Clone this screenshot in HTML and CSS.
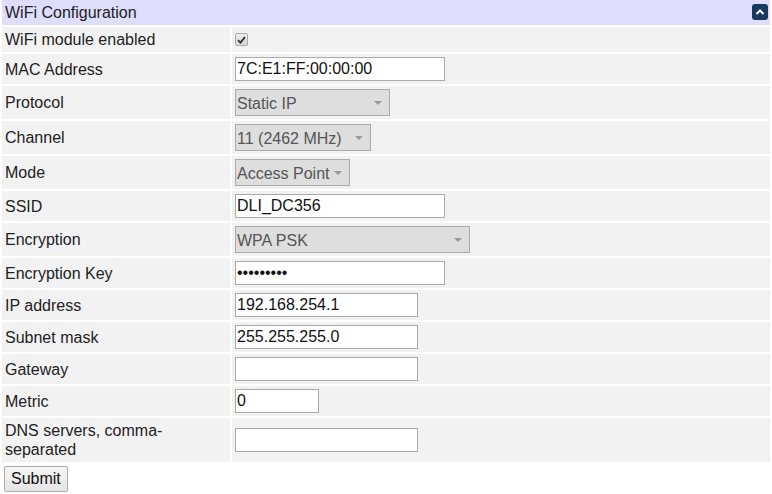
FILE: index.html
```html
<!DOCTYPE html>
<html lang="en">
<head>
  <meta charset="UTF-8">
  <title>WiFi Configuration</title>
  <link rel="stylesheet" href="styles.css">
</head>
<body>
  <form class="config">
    <table class="config-table">
      <thead>
        <tr>
          <th colspan="2" class="panel-title">
            WiFi Configuration
            <button type="button" class="collapse" title="Collapse">
              <svg width="10" height="6" viewBox="0 0 10 6"><path d="M1.5 5 L5 1.5 L8.5 5" fill="none" stroke="#fff" stroke-width="2"/></svg>
            </button>
          </th>
        </tr>
      </thead>
      <tbody>
        <tr>
          <td class="label">WiFi module enabled</td>
          <td class="value">
            <span class="check"><svg width="9" height="8" viewBox="0 0 9 8"><path d="M1 4.2 L3.4 6.6 L8 1.2" fill="none" stroke="#333" stroke-width="1.8"/></svg></span>
          </td>
        </tr>
        <tr>
          <td class="label">MAC Address</td>
          <td class="value"><input class="text wide" type="text" value="7C:E1:FF:00:00:00"></td>
        </tr>
        <tr>
          <td class="label">Protocol</td>
          <td class="value"><span class="select w-protocol"><select disabled><option>Static IP</option></select></span></td>
        </tr>
        <tr>
          <td class="label">Channel</td>
          <td class="value"><span class="select w-channel"><select disabled><option>11 (2462 MHz)</option></select></span></td>
        </tr>
        <tr>
          <td class="label">Mode</td>
          <td class="value"><span class="select w-mode"><select disabled><option>Access Point</option></select></span></td>
        </tr>
        <tr>
          <td class="label">SSID</td>
          <td class="value"><input class="text wide" type="text" value="DLI_DC356"></td>
        </tr>
        <tr>
          <td class="label">Encryption</td>
          <td class="value"><span class="select w-enc"><select disabled><option>WPA PSK</option></select></span></td>
        </tr>
        <tr>
          <td class="label">Encryption Key</td>
          <td class="value"><input class="text wide" type="password" value="secretkey"></td>
        </tr>
        <tr>
          <td class="label">IP address</td>
          <td class="value"><input class="text mid" type="text" value="192.168.254.1"></td>
        </tr>
        <tr>
          <td class="label">Subnet mask</td>
          <td class="value"><input class="text mid" type="text" value="255.255.255.0"></td>
        </tr>
        <tr>
          <td class="label">Gateway</td>
          <td class="value"><input class="text mid" type="text" value=""></td>
        </tr>
        <tr>
          <td class="label">Metric</td>
          <td class="value"><input class="text short" type="text" value="0"></td>
        </tr>
        <tr>
          <td class="label">DNS servers, comma-separated</td>
          <td class="value"><input class="text mid" type="text" value=""></td>
        </tr>
      </tbody>
    </table>
    <button type="submit" class="submit">Submit</button>
  </form>
</body>
</html>
```

FILE: styles.css
```css
body {
  margin: 0;
  font-family: "Liberation Sans", Arial, sans-serif;
  font-size: 16px;
  color: #222;
  background: #fff;
}

.config-table {
  width: 100%;
  margin-top: -2px;
  border-spacing: 2px;
}

.config-table td,
.config-table th {
  padding: 3px;
  line-height: 19px;
  vertical-align: middle;
}

.panel-title {
  background: #dedefc;
  font-weight: normal;
  text-align: left;
  color: #222;
}

.collapse {
  float: right;
  width: 16px;
  height: 16px;
  margin: 1px -1px 0 0;
  padding: 0;
  border: none;
  border-radius: 3px;
  background: #173b5f;
  display: flex;
  align-items: center;
  justify-content: center;
}

.label {
  width: 222px;
  background: #f2f2f2;
}

.value {
  background: #f2f2f2;
}

.check {
  display: flex;
  align-items: center;
  justify-content: center;
  width: 11px;
  height: 11px;
  margin: 3px 0;
  border: 1px solid #aaa;
  border-radius: 2px;
  background: linear-gradient(#eee, #d6d6d6);
}

.text {
  box-sizing: border-box;
  height: 24px;
  margin: 0;
  padding: 1px;
  border: 1px solid #aaa;
  font-family: inherit;
  font-size: 16px;
  color: #111;
  background: #fff;
  display: block;
}

.wide { width: 210px; }
.mid { width: 183px; }
.short { width: 84px; }

.select {
  position: relative;
  display: block;
}

.select select {
  box-sizing: border-box;
  width: 100%;
  height: 27px;
  margin: 0;
  padding: 1px 1px 0;
  border: 1px solid #aaa;
  border-radius: 0;
  -webkit-appearance: none;
  appearance: none;
  background: #dedede;
  color: #555;
  font-family: inherit;
  font-size: 16px;
  opacity: 1;
}

.select::after {
  content: "";
  position: absolute;
  right: 8px;
  top: 12px;
  border-left: 4px solid transparent;
  border-right: 4px solid transparent;
  border-top: 4px solid #999;
}

.w-protocol { width: 155px; }
.w-channel { width: 136px; }
.w-mode { width: 115px; }
.w-enc { width: 235px; }

.submit {
  margin: 2px 0 0 4px;
  height: 26px;
  padding: 0 6px;
  border: 1px solid #aaa;
  border-radius: 2px;
  background: linear-gradient(#f6f6f6, #e4e4e4);
  font-family: inherit;
  font-size: 16px;
  color: #111;
}
```
